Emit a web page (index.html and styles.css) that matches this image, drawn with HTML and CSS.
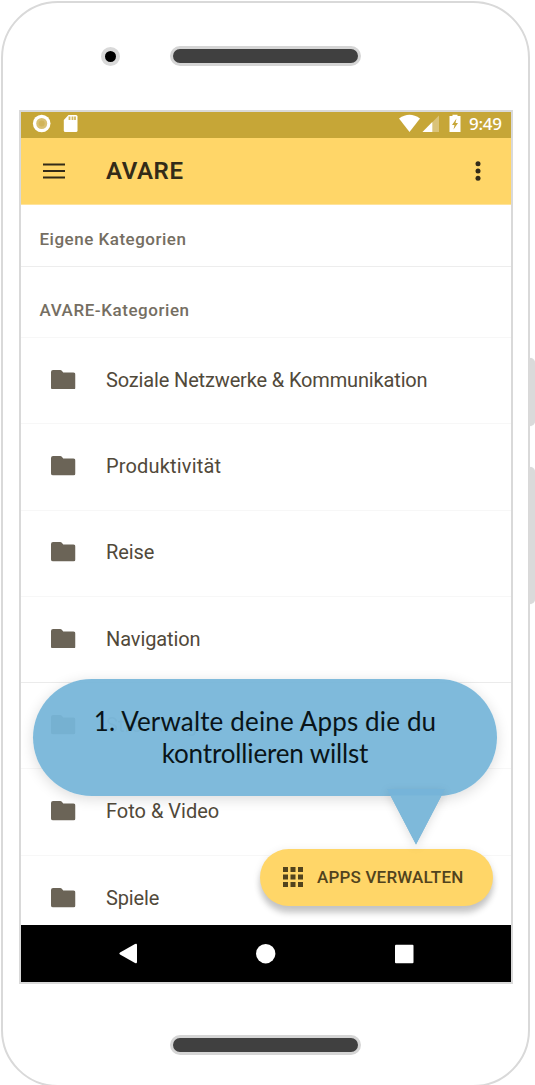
FILE: index.html
```html
<!DOCTYPE html>
<html lang="de">
<head>
<meta charset="utf-8">
<title>AVARE</title>
<link rel="stylesheet" href="styles.css">
</head>
<body>
<svg width="0" height="0" class="defs"><symbol id="folder" viewBox="0 0 24 19"><path d="M2 0H9Q10 0 10.6.7L12 2.3H22Q24 2.3 24 4.3V17Q24 19 22 19H2Q0 19 0 17V2Q0 0 2 0Z"/></symbol></svg>
<div class="phone">
  <i class="side power"></i><i class="side volume"></i>
  <header class="top"><i class="camera"></i><i class="speaker"></i></header>
  <main class="screen">
    <div class="status">
      <svg width="60" height="26" viewBox="0 0 60 26"><circle cx="20.7" cy="11.5" r="8.8" fill="#fff"/><circle cx="20.7" cy="11.5" r="5.5" fill="#d9c073"/><circle cx="20.7" cy="11.5" r="3" fill="#d1b45a"/><path d="M47.5 3H55q1.500 0 1.500 1.500V18.500Q56.500 20 55 20H44.300Q42.800 20 42.800 18.500V8Z" fill="#fff"/><path d="M48.500 4.500v3.500M51.500 4.500v3.500M54 4.500v3.500" stroke="#d3b960" stroke-width="1.800"/></svg>
      <svg class="signals" width="66" height="26" viewBox="0 0 66 26"><path d="M0 6.500Q10.500-1 21 6.500L10.500 20Z" fill="#fff"/><path d="M40 3.500V20H23.500Z" fill="#dac379"/><path d="M33.300 10V20H23.500Z" fill="#fff"/><path d="M53.500 4V2.800h5V4H61.500V20H50.500V4Z" fill="#fff"/><path d="M57.500 6.500L53 13h2.500L54.500 17.500L59 11h-2.500Z" fill="#c6a637"/></svg>
      <span class="clock">9:49</span>
    </div>
    <div class="appbar">
      <svg width="22" height="16" viewBox="0 0 22 16"><path d="M0 1.500H22M0 8H22M0 14.500H22" stroke="#332b18" stroke-width="2.200"/></svg>
      <h1>AVARE</h1>
      <svg class="more" width="6" height="20" viewBox="0 0 6 20" fill="#332b18"><circle cx="3" cy="2.800" r="2.500"/><circle cx="3" cy="10" r="2.500"/><circle cx="3" cy="17.200" r="2.500"/></svg>
    </div>
    <div class="list">
      <h2 class="own">Eigene Kategorien</h2>
      <h2 class="preset">AVARE-Kategorien</h2>
      <div class="row"><svg class="folder"><use href="#folder"/></svg><span class="social">Soziale Netzwerke &amp; Kommunikation</span></div>
      <div class="row"><svg class="folder"><use href="#folder"/></svg><span class="productivity">Produktivität</span></div>
      <div class="row"><svg class="folder"><use href="#folder"/></svg><span class="travel">Reise</span></div>
      <div class="row strong"><svg class="folder"><use href="#folder"/></svg><span class="travel">Navigation</span></div>
      <div class="row"><svg class="folder"><use href="#folder"/></svg><span class="covered">Streaming</span></div>
      <div class="row"><svg class="folder"><use href="#folder"/></svg><span>Foto &amp; Video</span></div>
      <div class="row last"><svg class="folder"><use href="#folder"/></svg><span class="social">Spiele</span></div>
    </div>
    <div class="nav">
      <svg width="490" height="57" viewBox="0 0 490 57" fill="#fff"><path d="M99 27.500L114 19Q116 18 116 20V37Q116 39 114 38L99 29.500Q97.500 28.500 99 27.500Z"/><circle cx="244.700" cy="28.700" r="9.700"/><rect x="374" y="19.800" width="18.500" height="18.500" rx="1"/></svg>
    </div>
    <button class="fab"><svg width="20" height="20" viewBox="0 0 20 20"><path d="M0 2.500H20M0 10H20M0 17.500H20" stroke="#51431d" stroke-width="5" stroke-dasharray="5 2.500"/></svg><span>APPS VERWALTEN</span></button>
    <div class="bubble"><p><span class="line-one">1. Verwalte deine Apps die du</span><br><span class="line-two">kontrollieren willst</span></p>
      <svg class="tail" width="58" height="56" viewBox="0 0 58 56"><path d="M0 0H58L29 55.500Z" fill="#76b4d9"/><path d="M3.500 6.500H54.500L29 55.500Z" fill="#7eb9da"/></svg>
    </div>
  </main>
  <footer class="bottom"><i class="speaker"></i></footer>
</div>
</body>
</html>
```
FILE: styles.css
```css
* { box-sizing: border-box; }
body { margin: 0; width: 535px; height: 1085px; overflow: hidden; background: #fff; font-family: Roboto, sans-serif; }
.defs { position: absolute; }
.phone { position: relative; width: 529px; height: 1086px; margin: 1px 0 0 1px; border: 2px solid #d9d9d9; border-radius: 57px; }
.side { position: absolute; left: 526px; width: 6px; background: #dadada; border-radius: 0 5px 5px 0; box-shadow: 0 0 1px #dadada; }
.power { top: 355px; height: 68px; }
.volume { top: 464px; height: 137px; }
.top { height: 107px; padding: 43px 0 0 98px; display: flex; align-items: flex-start; gap: 50px; }
.camera { width: 19px; height: 19px; border: 4px solid #d9d9d9; border-radius: 50%; background: #000; margin-top: 1px; }
.speaker { display: block; width: 191px; height: 20px; border: 3px solid #d5d5d5; border-radius: 10px; background: #404040; }
.screen { position: relative; width: 494px; height: 874px; margin-left: 16px; border: 2px solid #d9d9d9; }
.status { height: 26px; display: flex; background: #c6a637; }
.signals { margin-left: 318px; }
.clock { margin-left: 4px; font: 500 17px/24px "Noto Sans", sans-serif; letter-spacing: -.3px; color: #fff; white-space: nowrap; }
.appbar { height: 67px; padding-left: 22px; display: flex; align-items: center; background: #ffd668; border-bottom: 1px solid #ffe39a; color: #332b18; }
.appbar h1 { margin: 0 0 0 41px; width: 80px; font-size: 24px; font-weight: 600; line-height: 30px; letter-spacing: .6px; }
.more { margin-left: 289px; }
.list { height: 720px; overflow: hidden; }
.list h2 { margin: 0; padding-left: 18.5px; color: #756e62; font-size: 17px; font-weight: 500; white-space: nowrap; }
.list .own { height: 62px; padding-top: 24px; line-height: 20px; border-bottom: 1px solid #ededed; letter-spacing: .5px; }
.list .preset { height: 71px; padding-top: 33px; line-height: 20px; border-bottom: 1px solid #f7f7f7; letter-spacing: .56px; }
.row { height: 86.3px; display: flex; align-items: center; gap: 30.5px; padding: 0 0 2px 30px; border-bottom: 1px solid #f7f7f7; color: #51493a; font-size: 20px; line-height: 24px; white-space: nowrap; }
.social { letter-spacing: -.15px; }
.productivity { letter-spacing: .17px; }
.travel { letter-spacing: -.1px; }
.covered { opacity: .5; }
.strong { border-color: #ebebeb; }
.last { border: 0; }
.folder { width: 24.5px; height: 19.5px; fill: #6b6457; flex: none; }
.nav { height: 57px; background: #000; }
.fab { position: absolute; left: 239px; top: 737px; width: 233px; height: 57px; padding: 0 0 1px 23px; border: 0; border-radius: 29px; background: #ffd668; box-shadow: 0 7px 6px rgba(0,0,0,.2), 0 1px 9px rgba(0,0,0,.08); color: #51431d; display: flex; align-items: center; gap: 14px; font: 500 17px/20px Roboto, sans-serif; letter-spacing: .19px; white-space: nowrap; }
.bubble { position: absolute; left: 12px; top: 566.5px; width: 464px; height: 117px; border-radius: 59px; background: rgba(119,182,217,.94); box-shadow: 0 3px 14px rgba(0,0,0,.14); text-align: center; color: #091418; white-space: nowrap; }
.bubble p { margin: 26px 0 0; font: 26px/32px Lato, sans-serif; }
.line-one { letter-spacing: .15px; }
.line-two { letter-spacing: -.15px; }
.tail { position: absolute; left: 354px; top: 110px; filter: drop-shadow(0 3px 5px rgba(0,0,0,.12)); }
.bottom { padding: 51px 0 0 167px; }
```
